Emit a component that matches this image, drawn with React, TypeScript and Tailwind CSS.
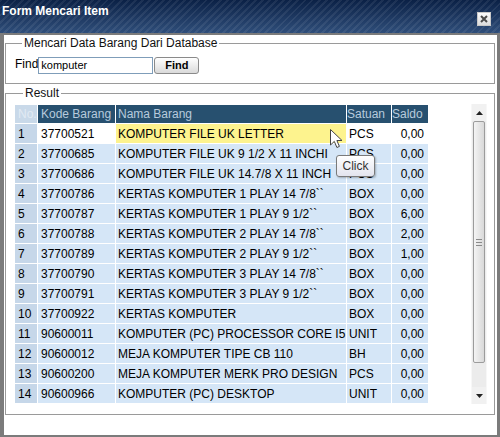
import React from 'react';

interface Item {
  no: number;
  kode: string;
  nama: string;
  satuan: string;
  saldo: string;
}

const items: Item[] = [
  { no: 1, kode: '37700521', nama: 'KOMPUTER FILE UK LETTER', satuan: 'PCS', saldo: '0,00' },
  { no: 2, kode: '37700685', nama: 'KOMPUTER FILE UK 9 1/2 X 11 INCHI', satuan: 'PCS', saldo: '0,00' },
  { no: 3, kode: '37700686', nama: 'KOMPUTER FILE UK 14.7/8 X 11 INCH', satuan: 'PCS', saldo: '0,00' },
  { no: 4, kode: '37700786', nama: 'KERTAS KOMPUTER 1 PLAY 14 7/8``', satuan: 'BOX', saldo: '0,00' },
  { no: 5, kode: '37700787', nama: 'KERTAS KOMPUTER 1 PLAY 9 1/2``', satuan: 'BOX', saldo: '6,00' },
  { no: 6, kode: '37700788', nama: 'KERTAS KOMPUTER 2 PLAY 14 7/8``', satuan: 'BOX', saldo: '2,00' },
  { no: 7, kode: '37700789', nama: 'KERTAS KOMPUTER 2 PLAY 9 1/2``', satuan: 'BOX', saldo: '1,00' },
  { no: 8, kode: '37700790', nama: 'KERTAS KOMPUTER 3 PLAY 14 7/8``', satuan: 'BOX', saldo: '0,00' },
  { no: 9, kode: '37700791', nama: 'KERTAS KOMPUTER 3 PLAY 9 1/2``', satuan: 'BOX', saldo: '0,00' },
  { no: 10, kode: '37700922', nama: 'KERTAS KOMPUTER', satuan: 'BOX', saldo: '0,00' },
  { no: 11, kode: '90600011', nama: 'KOMPUTER (PC) PROCESSOR CORE I5', satuan: 'UNIT', saldo: '0,00' },
  { no: 12, kode: '90600012', nama: 'MEJA KOMPUTER TIPE CB 110', satuan: 'BH', saldo: '0,00' },
  { no: 13, kode: '90600200', nama: 'MEJA KOMPUTER MERK PRO DESIGN', satuan: 'PCS', saldo: '0,00' },
  { no: 14, kode: '90600966', nama: 'KOMPUTER (PC) DESKTOP', satuan: 'UNIT', saldo: '0,00' },
];

const cell = 'h-[19px] flex items-center whitespace-nowrap overflow-hidden';
const head = 'h-[18px] flex items-center whitespace-nowrap overflow-hidden bg-[#27506f] text-[#b7cbdd]';

const Row = ({ item, selected }: { item: Item; selected: boolean }) => {
  const bg = selected ? 'bg-white' : 'bg-[#d5e6f7]';
  return (
    <>
      <div className={`${cell} pl-[3px] bg-[#c6d7e9]`}>{item.no}</div>
      <div className={`${cell} pl-[3px] ${bg}`}>{item.kode}</div>
      <div className={`${cell} pl-[2px] ${selected ? 'bg-[#fdf38e]' : 'bg-[#d5e6f7]'}`}>{item.nama}</div>
      <div className={`${cell} pl-[2px] ${bg}`}>{item.satuan}</div>
      <div className={`${cell} justify-end pr-[4px] ${bg}`}>{item.saldo}</div>
    </>
  );
};

const Scrollbar = () => (
  <div className="w-[16px] h-[300px] flex flex-col bg-[#ececec] border-x border-[#f7f7f7]">
    <div className="h-[17px] flex items-center justify-center bg-[#f1f1f1]">
      <svg width="7" height="4" viewBox="0 0 7 4">
        <path d="M0 4 L3.5 0 L7 4 Z" fill="#222" />
      </svg>
    </div>
    <div className="h-[242px] mx-px rounded-[2px] border border-[#9c9c9c] bg-gradient-to-r from-[#f4f4f4] to-[#d9d9d9] flex flex-col items-center justify-center gap-[2px]">
      <div className="w-[6px] h-px bg-[#8a8a8a]" />
      <div className="w-[6px] h-px bg-[#8a8a8a]" />
      <div className="w-[6px] h-px bg-[#8a8a8a]" />
    </div>
    <div className="flex-1" />
    <div className="h-[17px] flex items-center justify-center bg-[#f1f1f1]">
      <svg width="7" height="4" viewBox="0 0 7 4">
        <path d="M0 0 L7 0 L3.5 4 Z" fill="#222" />
      </svg>
    </div>
  </div>
);

export default function App() {
  return (
    <div className="relative w-[500px] h-[437px] bg-[#7b7b7b] flex flex-col font-['Liberation_Sans',Arial,sans-serif] text-[12px] text-black overflow-hidden">
      <div className="h-[33px] flex justify-between items-start pl-[2px] pr-[9px] [background-image:repeating-linear-gradient(135deg,rgba(255,255,255,0.07)_0px,rgba(255,255,255,0.07)_2px,transparent_2px,transparent_5px),linear-gradient(to_bottom,#0b2146,#2f4e7a)]">
        <span className="pt-[4px] leading-[14px] font-bold text-white">Form Mencari Item</span>
        <button className="mt-[12px] w-[14px] h-[14px] flex items-center justify-center border border-[#c9c9c9] bg-gradient-to-b from-[#fbfbfb] to-[#dcdcdc]">
          <svg width="8" height="8" viewBox="0 0 8 8">
            <path d="M1 1 L7 7 M7 1 L1 7" stroke="#4a4a4a" strokeWidth="2" />
          </svg>
        </button>
      </div>

      <div className="flex-1 mt-[2px] mb-[2px] ml-[4px] mr-[3px] bg-white pl-[1px] pr-[2px]">
        <fieldset className="mt-[1px] border border-[#9a9a9a] px-[8px] pt-[6px] pb-[9px]">
          <legend className="ml-[8px] px-[2px] leading-[14px] text-[#111]">Mencari Data Barang Dari Database</legend>
          <div className="flex items-center h-[18px] ml-[1px]">
            <span className="leading-[14px] mt-[-3px]">Find</span>
            <input
              readOnly
              value="komputer"
              className="w-[115px] h-[17px] border border-[#7f9db9] px-[2px] text-[11px] outline-none"
            />
            <button className="ml-[1px] w-[45px] h-[17px] rounded-[3px] border border-[#8a8a8a] bg-gradient-to-b from-white to-[#dadada] text-[11px] font-bold leading-[14px]">
              Find
            </button>
          </div>
        </fieldset>

        <fieldset className="mt-[2px] border border-[#9a9a9a] pl-[9px] pr-[7px] pt-[4px] pb-[10px]">
          <legend className="ml-[8px] px-[2px] leading-[14px] text-[#111]">Result</legend>
          <div className="flex justify-between h-[300px]">
            <div className="mt-px self-start grid grid-cols-[22px_77px_230px_44px_36px] gap-px bg-white">
              <div className={`${head} pl-[3px] bg-[#c9d9e9] text-[#e1eaf3]`}>No.</div>
              <div className={`${head} pl-[3px]`}>Kode Barang</div>
              <div className={`${head} pl-[2px]`}>Nama Barang</div>
              <div className={`${head} pl-0`}>Satuan</div>
              <div className={`${head} pl-0`}>Saldo</div>
              {items.map(item => (
                <Row key={item.no} item={item} selected={item.no === 1} />
              ))}
            </div>
            <Scrollbar />
          </div>
        </fieldset>
      </div>

      <div className="absolute left-[336px] top-[155px] w-[39px] h-[22px] rounded-[3px] border border-[#7a7a7a] bg-gradient-to-b from-white to-[#e3e4ee] flex items-center justify-center text-[#333] shadow-[1px_1px_2px_rgba(0,0,0,0.25)]">
        Click
      </div>
      <svg className="absolute left-[330px] top-[129px]" width="13" height="20" viewBox="0 0 13 20">
        <path d="M0.5 0.5 L0.5 16 L4.3 12.4 L6.9 18.5 L9.4 17.4 L6.9 11.5 L12 11.5 Z" fill="#fff" stroke="#444" strokeWidth="1" strokeLinejoin="round" />
      </svg>
    </div>
  );
}
